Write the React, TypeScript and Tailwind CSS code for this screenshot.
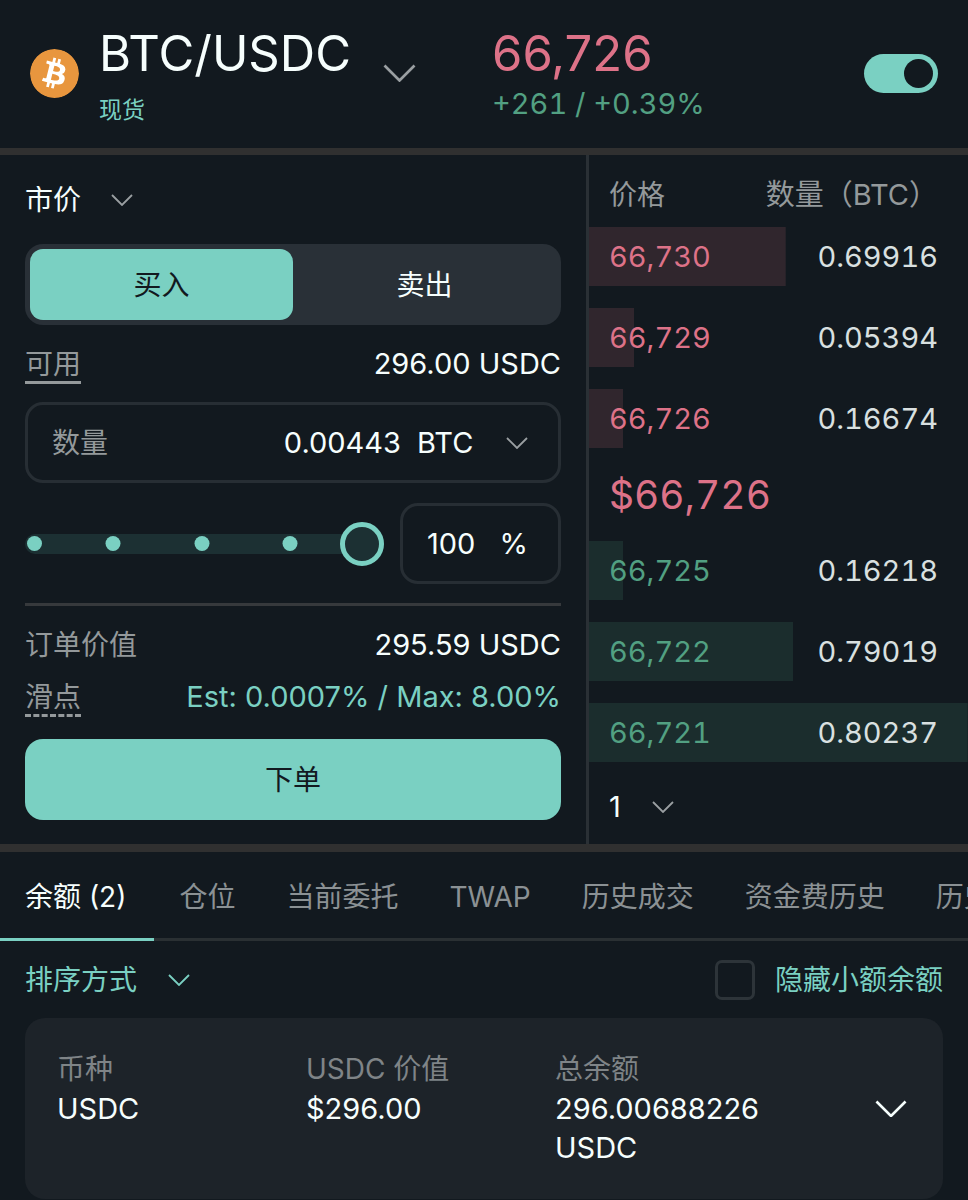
import React from "react";
import { SiBitcoin } from "react-icons/si";

interface Level {
  price: string;
  size: string;
  depth: number;
}

const asks: Level[] = [
  { price: "66,730", size: "0.69916", depth: 52 },
  { price: "66,729", size: "0.05394", depth: 12 },
  { price: "66,726", size: "0.16674", depth: 9 },
];

const bids: Level[] = [
  { price: "66,725", size: "0.16218", depth: 9 },
  { price: "66,722", size: "0.79019", depth: 54 },
  { price: "66,721", size: "0.80237", depth: 100 },
];

const tabs = ["余额 (2)", "仓位", "当前委托", "TWAP", "历史成交", "资金费历史", "历史委托"];

const Chevron: React.FC<{ className?: string }> = ({ className = "" }) => (
  <svg viewBox="0 0 22 12" fill="none" stroke="currentColor" strokeWidth="1.8" className={className} aria-hidden="true">
    <path d="M1 1l10 10L21 1" />
  </svg>
);

const Header: React.FC = () => (
  <header className="grid grid-cols-2 border-b-[7px] border-[#303030] pt-5 pb-[22px]">
    <div className="flex items-center pl-[30px]">
      <SiBitcoin className="size-[49px] shrink-0 rounded-full bg-[radial-gradient(white_60%,transparent_61%)] text-[#e8963e]" />
      <div className="ml-5">
        <h1 className="text-[49px] leading-[68px]">BTC/USDC</h1>
        <p className="mt-1.5 text-[23px] leading-8 text-[#7ad0c2]">现货</p>
      </div>
      <button type="button" aria-label="选择交易对" className="ml-8 text-[#9a9fa2]">
        <Chevron className="w-[33px]" />
      </button>
    </div>

    <div className="flex items-center justify-between pr-[30px] pl-2">
      <div className="self-start">
        <p className="text-[49px] leading-[68px] text-[#dd7288]">66,726</p>
        <p className="text-[29px] leading-8 text-[#52a082] tabular-nums">+261 / +0.39%</p>
      </div>
      <label className="relative flex">
        <input
          type="checkbox"
          defaultChecked
          aria-label="显示图表"
          className="peer h-[39px] w-[74px] appearance-none rounded-full bg-[#293037] checked:bg-[#7ad0c2]"
        />
        <span className="pointer-events-none absolute top-[5px] left-[5px] size-[29px] rounded-full bg-[#12191f] peer-checked:right-[5px] peer-checked:left-auto" />
      </label>
    </div>
  </header>
);

const OrderForm: React.FC = () => (
  <form className="min-w-0 px-[25px] pt-[21px] pb-6">
    <label className="relative inline-flex h-12 items-center">
      <select aria-label="订单类型" className="appearance-none pr-[51px]">
        <option>市价</option>
      </select>
      <Chevron className="pointer-events-none absolute right-0 w-[22px] text-[#9a9fa2]" />
    </label>

    {/* 买卖切换 */}
    <div className="mt-5 grid h-[81px] grid-cols-2 rounded-[18px] bg-[#293037] p-[5px]">
      <button type="button" className="rounded-[13px] bg-[#7ad0c2] text-[#12191f]">买入</button>
      <button type="button" className="rounded-[13px]">卖出</button>
    </div>

    <div className="flex h-[77px] items-center justify-between">
      <span className="text-[#94999b] underline decoration-[3px] underline-offset-[7px]">可用</span>
      <span className="text-[29px]">296.00 USDC</span>
    </div>

    <div className="flex h-[81px] items-center rounded-[18px] border-[3px] border-[#272e34] px-6">
      <label htmlFor="size" className="shrink-0 text-[#94999b]">数量</label>
      <input id="size" defaultValue="0.00443" className="min-w-0 flex-1 text-right text-[29px] outline-none" />
      <label className="relative ml-4 inline-flex items-center">
        <select aria-label="单位" className="appearance-none pr-[60px] text-[29px]">
          <option>BTC</option>
        </select>
        <Chevron className="pointer-events-none absolute right-1.5 w-[22px] text-[#9a9fa2]" />
      </label>
    </div>

    <div className="mt-5 flex items-center gap-4">
      <div className="relative flex min-w-0 flex-1 items-center">
        <input
          type="range"
          min="0"
          max="100"
          defaultValue="100"
          aria-label="仓位比例"
          className="h-11 w-full appearance-none bg-transparent [&::-webkit-slider-runnable-track]:h-5 [&::-webkit-slider-runnable-track]:rounded-full [&::-webkit-slider-runnable-track]:bg-[#1c3033] [&::-webkit-slider-thumb]:-mt-3 [&::-webkit-slider-thumb]:size-11 [&::-webkit-slider-thumb]:appearance-none [&::-webkit-slider-thumb]:rounded-full [&::-webkit-slider-thumb]:border-[5px] [&::-webkit-slider-thumb]:border-[#7ad0c2] [&::-webkit-slider-thumb]:bg-[#1c3033]"
        />
        <div className="pointer-events-none absolute inset-x-0 flex h-[15px]">
          <i className="absolute left-[2px] size-[15px] rounded-full bg-[#7ad0c2]" />
          {[25, 50, 75].map((stop) => (
            <i
              key={stop}
              className="absolute size-[15px] -translate-x-1/2 rounded-full bg-[#7ad0c2]"
              style={{ left: `${stop * 0.986}%` }}
            />
          ))}
        </div>
      </div>
      <label className="flex h-[81px] w-[161px] shrink-0 items-center justify-between rounded-[18px] border-[3px] border-[#272e34] pr-[30px] pl-6 text-[29px]">
        <input defaultValue="100" aria-label="百分比" className="w-[60px] outline-none" />
        <span>%</span>
      </label>
    </div>

    <div className="mt-[19px] border-t-[3px] border-[#36393c] pt-[13px]">
      <div className="flex h-[52px] items-center justify-between">
        <span className="text-[#94999b]">订单价值</span>
        <span className="text-[29px]">295.59 USDC</span>
      </div>
      <div className="flex h-[52px] items-center justify-between">
        <span className="text-[#94999b] underline decoration-dashed decoration-[3px] underline-offset-[7px]">滑点</span>
        <span className="text-[29px] text-[#7ad0c2]">Est: 0.0007% / Max: 8.00%</span>
      </div>
    </div>

    <button type="submit" className="mt-4 h-[81px] w-full rounded-[18px] bg-[#7ad0c2] text-[#12191f]">
      下单
    </button>
  </form>
);

const LevelRow: React.FC<{ level: Level; side: "ask" | "bid" }> = ({ level, side }) => (
  <tr
    className={
      side === "ask"
        ? "h-[59px] bg-linear-to-r from-[#30262d] to-[#30262d] bg-no-repeat text-[#dd7288]"
        : "h-[59px] bg-linear-to-r from-[#1b2d2d] to-[#1b2d2d] bg-no-repeat text-[#52a082]"
    }
    style={{ backgroundSize: `${level.depth}% 100%` }}
  >
    <td className="p-0 pl-5">{level.price}</td>
    <td className="p-0 pr-[30px] text-right text-[#d9e0e0]">{level.size}</td>
  </tr>
);

const OrderBook: React.FC = () => (
  <section className="min-w-0 border-l-[3px] border-[#2a3035]">
    <table className="w-full border-separate border-spacing-x-0 border-spacing-y-[22px] tabular-nums">
      <thead>
        <tr className="h-7 leading-5 text-[#94999b]">
          <th className="p-0 pt-2 pl-5 text-left font-normal">价格</th>
          <th className="p-0 pt-2 pr-[30px] text-right text-[29px] font-normal whitespace-nowrap">数量（BTC）</th>
        </tr>
      </thead>
      <tbody className="text-[29px]">
        {asks.map((level) => (
          <LevelRow key={level.price} level={level} side="ask" />
        ))}
        <tr className="h-[49px]">
          <td colSpan={2} className="p-0 pl-5 text-[39px] leading-[49px] text-[#dd7288]">$66,726</td>
        </tr>
        {bids.map((level) => (
          <LevelRow key={level.price} level={level} side="bid" />
        ))}
      </tbody>
    </table>
    <label className="relative ml-5 inline-flex h-[46px] items-center">
      <select aria-label="价格精度" className="appearance-none pr-[53px] text-[29px]">
        <option>1</option>
      </select>
      <Chevron className="pointer-events-none absolute right-0 w-[22px] text-[#9a9fa2]" />
    </label>
  </section>
);

const Balances: React.FC = () => (
  <section className="border-t-[8px] border-[#303030]">
    <nav className="flex overflow-hidden">
      {tabs.map((tab, idx) => (
        <button
          key={tab}
          type="button"
          className={
            idx === 0
              ? "h-[89px] shrink-0 border-b-[3px] border-[#7ad0c2] pt-1 pr-7 pl-[25px]"
              : "h-[89px] shrink-0 border-b-[3px] border-[#2a3033] pt-1 pr-[26px] pl-[25px] text-[#8b9194]"
          }
        >
          {tab}
        </button>
      ))}
    </nav>

    <div className="flex h-[77px] items-center justify-between px-[25px] text-[#7ad0c2]">
      <label className="relative inline-flex items-center">
        <select aria-label="排序方式" className="appearance-none pr-[52px]">
          <option>排序方式</option>
        </select>
        <Chevron className="pointer-events-none absolute right-0 w-[22px]" />
      </label>
      <label className="flex items-center gap-5">
        <input
          type="checkbox"
          className="size-10 appearance-none rounded-[7px] border-[3px] border-[#2d3439] checked:bg-[#7ad0c2]"
        />
        隐藏小额余额
      </label>
    </div>

    <div className="mx-[25px] flex items-center rounded-[20px] bg-[#1d2329] p-8 leading-[39px]">
      <table className="w-full table-fixed">
        <thead>
          <tr className="text-left text-[#7f8487]">
            <th className="p-0 font-normal">币种</th>
            <th className="p-0 font-normal">USDC 价值</th>
            <th className="p-0 font-normal">总余额</th>
          </tr>
        </thead>
        <tbody>
          <tr className="align-top text-[29px]">
            <td className="p-0">USDC</td>
            <td className="p-0">$296.00</td>
            <td className="p-0">296.00688226 USDC</td>
          </tr>
        </tbody>
      </table>
      <button type="button" aria-label="展开" className="flex w-[107px] shrink-0 justify-end pr-1">
        <Chevron className="w-8" />
      </button>
    </div>
  </section>
);

const App: React.FC = () => {
  return (
    <main className="min-h-screen bg-[#12191f] font-['Inter','Noto_Sans_CJK_SC',sans-serif] text-[28px] leading-7 text-[#f6fefd]">
      <Header />
      <div className="grid grid-cols-[586fr_382fr]">
        <OrderForm />
        <OrderBook />
      </div>
      <Balances />
    </main>
  );
};

export default App;
